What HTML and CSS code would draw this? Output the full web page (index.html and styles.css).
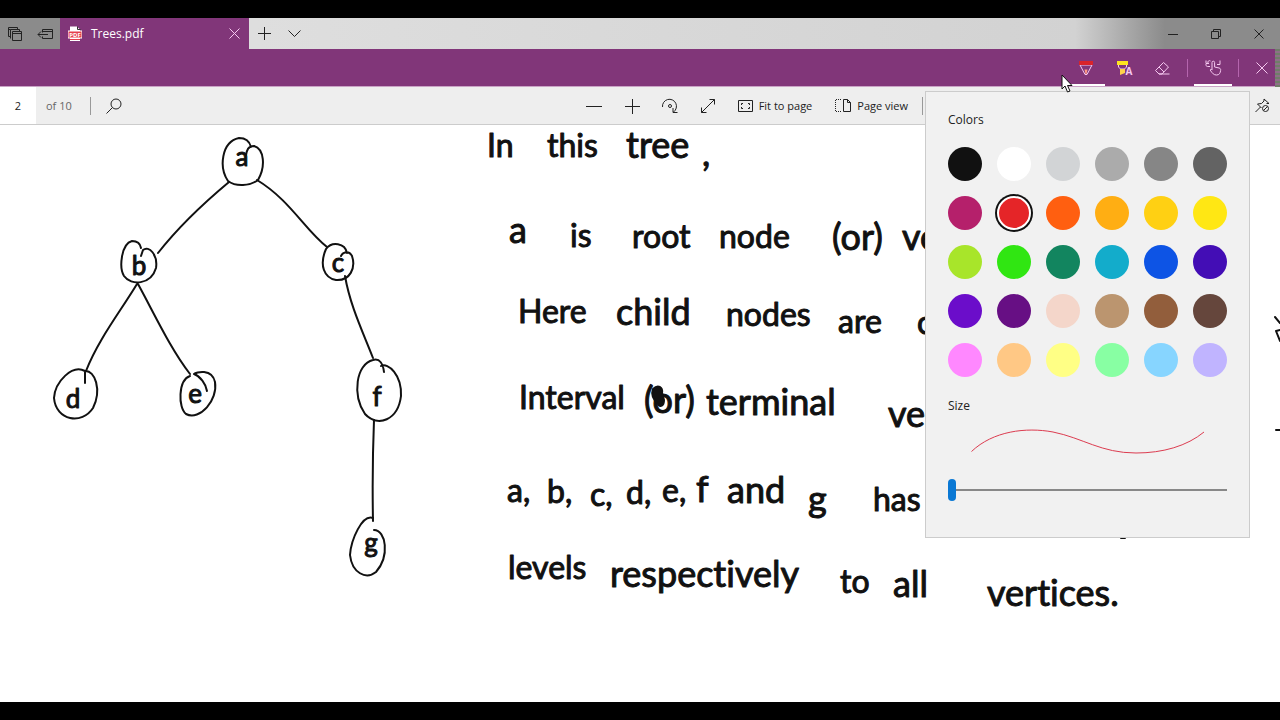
FILE: index.html
```html
<!DOCTYPE html>
<html lang="en">
<head>
    <meta charset="UTF-8">
    <meta name="viewport" content="width=device-width, initial-scale=1.0">
    <title>Trees.pdf</title>
    <link rel="stylesheet" href="styles.css">
</head>
<body>
    <header class="titlebar">
        <div class="tab-tools">
            <button type="button" class="icon-btn" aria-label="Tabs you've set aside">
                <svg width="14" height="14" viewBox="0 0 14 14"><path d="M2.500 9.500h-2v-9h9v2M.5 2.500h2M4.500 4.500h9v9h-9zM4.500 6.500h9M2.500 11.500v-9h9v2"/></svg>
            </button>
            <button type="button" class="icon-btn" aria-label="Set these tabs aside">
                <svg width="16" height="14" viewBox="0 0 16 14"><path d="M5.500 5.500v-3h10v9h-10v-2M5.500 4.500h10M11 7.500H1M4 4.500l-3 3 3 3"/></svg>
            </button>
        </div>
        <div class="tab">
            <svg class="pdf-icon" width="14" height="16" viewBox="0 0 14 16">
                <path d="M2 .5h7l3 3V15H2z" fill="#fff" stroke="none"/>
                <path d="M9.500 .5v3h3" fill="none" stroke="#333"/>
                <rect y="5" width="14" height="7" fill="#e5404c"/>
                <path d="M2 13.500h10" stroke="#e5404c"/>
                <text x="7" y="11" text-anchor="middle">PDF</text>
            </svg>
            <span class="tab-title">Trees.pdf</span>
            <button type="button" class="icon-btn tab-close" aria-label="Close tab">
                <svg width="11" height="11" viewBox="0 0 11 11"><path d="M.5.5l10 10M10.500.5l-10 10"/></svg>
            </button>
        </div>
        <button type="button" class="icon-btn" aria-label="New tab">
            <svg width="13" height="13" viewBox="0 0 13 13"><path d="M6.500 0v13M0 6.500h13"/></svg>
        </button>
        <button type="button" class="icon-btn" aria-label="Show tab previews">
            <svg width="13" height="7" viewBox="0 0 13 7"><path d="M.5.5l6 6 6-6"/></svg>
        </button>
        <div class="window-controls">
            <button type="button" class="icon-btn" aria-label="Minimize">
                <svg width="10" height="10" viewBox="0 0 10 10"><path d="M0 5.500h10"/></svg>
            </button>
            <button type="button" class="icon-btn" aria-label="Restore">
                <svg width="10" height="10" viewBox="0 0 10 10"><path d="M.5 2.500h7v7h-7zM2.500 2.500v-2h7v7h-2"/></svg>
            </button>
            <button type="button" class="icon-btn" aria-label="Close window">
                <svg width="10" height="10" viewBox="0 0 10 10"><path d="M.5.5l9 9M9.500.5l-9 9"/></svg>
            </button>
        </div>
    </header>

    <div class="ink-row">
        <div class="ink-bar">
            <button type="button" class="ink-btn active" aria-label="Pen">
                <svg width="16" height="18" viewBox="0 0 16 18"><path d="M2 6l5 9.500h2L14 6z"/><path d="M6.500 10.500h3L8.500 15h-1z" fill="#ff9a86" stroke="none"/><path d="M1 2h14v4H1z" fill="#d9232b" stroke="none"/></svg>
            </button>
            <button type="button" class="ink-btn" aria-label="Highlighter">
                <svg width="18" height="18" viewBox="0 0 18 18"><path d="M3.500 6v2l2 2h4l2-2V6"/><path d="M5 10h5v4l-5 2z" fill="#ffd24a" stroke="none"/><path d="M2 2h11v4H2z" fill="#ffe51f" stroke="none"/><text x="14" y="16" text-anchor="middle">A</text></svg>
            </button>
            <button type="button" class="ink-btn" aria-label="Eraser">
                <svg width="16" height="14" viewBox="0 0 16 14"><path d="M9.500 1.500l5 4.500-6.500 7H5L1.500 9.500zM5 6l5 5M5 13h10.500"/></svg>
            </button>
            <span class="divider"></span>
            <button type="button" class="ink-btn active" aria-label="Touch writing">
                <svg width="17" height="17" viewBox="0 0 17 17"><path d="M7 11V3.500a1.300 1.300 0 0 1 2.600 0V8l4.500 1c1.500.4 1.700 1.200 1.500 2.500-.3 2.500-1.300 4.500-4 4.500-3 0-4-1.500-6.500-5 .5-1 1.500-.7 2 0M5 7.500H2.500C0 7 .5 4 3 4.500 2 2 4.500 1 5.500 2M1 1.500v3h3M15 1.500v4h-3"/></svg>
            </button>
            <span class="divider"></span>
            <button type="button" class="ink-btn ink-close" aria-label="Exit notes">
                <svg width="12" height="12" viewBox="0 0 12 12"><path d="M.5.5l11 11M11.500.5l-11 11"/></svg>
            </button>
        </div>
        <svg class="cursor" width="12" height="19" viewBox="0 0 12 19"><path d="M1 1v14l3-3 2.500 6 2.500-1-2.500-5.500H11z"/></svg>
    </div>

    <nav class="toolbar">
        <input class="page-input" type="text" value="2" aria-label="Page number">
        <span class="page-total">of 10</span>
        <span class="divider"></span>
        <button type="button" class="icon-btn search-btn" aria-label="Search">
            <svg width="16" height="16" viewBox="0 0 16 16"><circle cx="10" cy="6" r="5"/><path d="M6.500 9.500L.5 15.500"/></svg>
        </button>
        <div class="view-tools">
            <button type="button" class="icon-btn" aria-label="Zoom out">
                <svg width="16" height="16" viewBox="0 0 16 16"><path d="M0 8.500h16"/></svg>
            </button>
            <button type="button" class="icon-btn" aria-label="Zoom in">
                <svg width="16" height="16" viewBox="0 0 16 16"><path d="M8.500 1v15M1 8.500h15"/></svg>
            </button>
            <button type="button" class="icon-btn" aria-label="Rotate">
                <svg width="16" height="16" viewBox="0 0 16 16"><path d="M.5 9A7 7 0 1 1 11.500 14M11 10v4.500h4.500"/><circle cx="8" cy="8" r="1.500"/></svg>
            </button>
            <button type="button" class="icon-btn" aria-label="Full screen">
                <svg width="14" height="14" viewBox="0 0 14 14"><path d="M.5 13.500l13-13M8.500.5h5v5M.5 8.500v5h5"/></svg>
            </button>
            <button type="button" class="text-btn">
                <svg width="15" height="12" viewBox="0 0 15 12"><path d="M.5.5h14v11H.5zM3.500 5V3.500H5M10 3.500h1.500V5M11.500 7v1.500H10M5 8.500H3.500V7"/></svg>
                Fit to page
            </button>
            <button type="button" class="text-btn">
                <svg width="16" height="13" viewBox="0 0 16 13"><path d="M8.500.5h4l3 3v9h-7zM12.500.5v3h3"/><path d="M6 .5H.5v12H6" stroke-dasharray="1 1"/></svg>
                Page view
            </button>
            <span class="divider"></span>
        </div>
        <div class="pin-tools">
            <button type="button" class="icon-btn" aria-label="Unpin toolbar">
                <svg width="15" height="15" viewBox="0 0 15 15"><path d="M.5 14l5-5M6.500 10L2.500 6l4-.5L9 3V1l5 4.500h-2.500"/><circle cx="10.500" cy="10.500" r="3"/><path d="M8.500 12.500l4-4"/></svg>
            </button>
        </div>
    </nav>

    <main class="page">
        <svg class="ink" width="1280" height="577" viewBox="0 125 1280 577">
            <!-- node outlines -->
            <path d="M251 147C249 139 243 138 239 138C221 142 219 168 228 181C236 187 250 186 258 180C266 166 264 149 254 146C248 146 247 150 246 155"/>
            <path d="M141 248C140 242 136 241 132 241C121 244 119 268 124 276C131 286 151 285 156 268C158 255 149 245 143 250L141 256"/>
            <path d="M347 253C345 243 332 241 326 249C319 265 324 278 336 280C350 281 356 268 352 256C349 250 343 252 341 256"/>
            <path d="M85 371C72 364 55 382 54 398C56 421 82 425 93 408C102 390 95 370 85 371V383"/>
            <path d="M190 376C178 380 178 408 186 414C200 421 218 400 215 382C212 368 196 372 194 374C200 376 206 384 207 391"/>
            <path d="M384 372C383 364 380 358 373 360C356 364 352 395 365 414C378 428 398 420 401 396C402 375 388 362 381 366"/>
            <path d="M373 518C362 514 351 540 350 555C352 573 366 580 376 572C390 556 386 530 374 530"/>
            <!-- edges -->
            <path d="M229 182C205 202 180 225 158 253M257 180C290 200 305 230 327 247M137 284C120 312 98 340 86 371M138 284C155 315 170 348 190 374M345 276C350 305 362 330 373 358M374 420Q372 470 373 521"/>
            <g class="node-label">
                <text x="242" y="166">a</text>
                <text x="139" y="275">b</text>
                <text x="338" y="272">c</text>
                <text x="73" y="408">d</text>
                <text x="195" y="403">e</text>
                <text x="377" y="406">f</text>
                <text x="371" y="552">g</text>
            </g>
            <text x="487" y="157">In</text>
            <text x="547" y="157">this</text>
            <text x="626" y="158" class="wide">tree</text>
            <text x="702" y="166" class="wide">,</text>

            <text x="509" y="243" class="wide">a</text>
            <text x="570" y="247">is</text>
            <text x="632" y="248">root</text>
            <text x="719" y="248">node</text>
            <text x="832" y="250" class="wide">(or)</text>
            <text x="902" y="250" class="wide">ve</text>

            <text x="518" y="323">Here</text>
            <text x="616" y="325" class="wide">child</text>
            <text x="726" y="326">nodes</text>
            <text x="838" y="333">are</text>
            <text x="917" y="334">c</text>

            <text x="519" y="409">Interval</text>
            <text x="644" y="413" class="wide">(or)</text>
            <path class="blot" d="M653 389C658 384 663 387 662 393L664 400C664 406 660 408 658 404C654 400 651 394 653 389z"/>
            <text x="706" y="415" class="wide">terminal</text>
            <text x="888" y="427" class="wide">ve</text>

            <text x="507" y="502">a,</text>
            <text x="547" y="503">b,</text>
            <text x="590" y="506">c,</text>
            <text x="626" y="504">d,</text>
            <text x="662" y="502">e,</text>
            <text x="696" y="502" class="wide">f</text>
            <text x="727" y="503" class="wide">and</text>
            <text x="808" y="512" class="wide">g</text>
            <text x="873" y="511">has</text>

            <text x="508" y="579">levels</text>
            <text x="610" y="587" class="wide">respectively</text>
            <text x="840" y="593">to</text>
            <text x="893" y="597" class="wide">all</text>
            <text x="987" y="606" class="wide">vertices.</text>
            <!-- strokes cut off by the panel and the page edge -->
            <path d="M1121 538h4M1275 317l5 6M1280 330l-4 1 4 10M1276 430h4"/>
        </svg>
    </main>

    <section class="pen-panel" aria-label="Pen options">
        <h2 id="colors" class="panel-title">Colors</h2>
        <div class="swatches" role="radiogroup" aria-labelledby="colors">
            <input type="radio" name="color" class="swatch black" aria-label="Black">
            <input type="radio" name="color" class="swatch white" aria-label="White">
            <input type="radio" name="color" class="swatch silver" aria-label="Light gray">
            <input type="radio" name="color" class="swatch gray" aria-label="Gray">
            <input type="radio" name="color" class="swatch mid-gray" aria-label="Medium gray">
            <input type="radio" name="color" class="swatch dark-gray" aria-label="Dark gray">
            <input type="radio" name="color" class="swatch magenta" aria-label="Magenta">
            <input type="radio" name="color" class="swatch red" aria-label="Red" checked>
            <input type="radio" name="color" class="swatch orange" aria-label="Orange">
            <input type="radio" name="color" class="swatch amber" aria-label="Amber">
            <input type="radio" name="color" class="swatch gold" aria-label="Gold">
            <input type="radio" name="color" class="swatch yellow" aria-label="Yellow">
            <input type="radio" name="color" class="swatch lime" aria-label="Lime">
            <input type="radio" name="color" class="swatch green" aria-label="Green">
            <input type="radio" name="color" class="swatch sea" aria-label="Sea green">
            <input type="radio" name="color" class="swatch cyan" aria-label="Cyan">
            <input type="radio" name="color" class="swatch blue" aria-label="Blue">
            <input type="radio" name="color" class="swatch indigo" aria-label="Indigo">
            <input type="radio" name="color" class="swatch violet" aria-label="Violet">
            <input type="radio" name="color" class="swatch purple" aria-label="Purple">
            <input type="radio" name="color" class="swatch blush" aria-label="Blush">
            <input type="radio" name="color" class="swatch tan" aria-label="Tan">
            <input type="radio" name="color" class="swatch brown" aria-label="Brown">
            <input type="radio" name="color" class="swatch dark-brown" aria-label="Dark brown">
            <input type="radio" name="color" class="swatch pink" aria-label="Pink">
            <input type="radio" name="color" class="swatch peach" aria-label="Peach">
            <input type="radio" name="color" class="swatch lemon" aria-label="Lemon">
            <input type="radio" name="color" class="swatch mint" aria-label="Mint">
            <input type="radio" name="color" class="swatch sky" aria-label="Sky blue">
            <input type="radio" name="color" class="swatch lavender" aria-label="Lavender">
        </div>
        <label for="size" class="panel-title">Size</label>
        <svg class="preview" width="234" height="26" viewBox="0 0 234 26"><path d="M.5 22.500C22 2 55-2 82 3C112 9 130 24 165 24C192 24 216 17 233 3"/></svg>
        <input type="range" id="size" class="size-slider" min="1" max="10" value="1">
    </section>
</body>
</html>
```

FILE: styles.css
```css
* {
    box-sizing: border-box;
}

body {
    font-family: "Open Sans", "Noto Sans", sans-serif;
    font-size: 12px;
    color: #222;
    background: #000;
    margin: 0;
    padding: 18px 0;
    height: 100vh;
    display: flex;
    flex-direction: column;
    position: relative;
    overflow: hidden;
}

button {
    font: inherit;
    color: inherit;
    background: none;
    border: none;
    padding: 0;
    display: flex;
    align-items: center;
    justify-content: center;
}

svg {
    fill: none;
    stroke: currentColor;
    display: block;
    flex: none;
}

.icon-btn {
    width: 30px;
    height: 100%;
}

.divider {
    width: 1px;
    height: 18px;
    background: #999;
}

/* title bar */
.titlebar {
    display: flex;
    flex: none;
    height: 31px;
    background: linear-gradient(to right, #dedede 20%, #d2d2d2 84%, #8b8b8b 91%, #8b8b8b);
}

.tab-tools {
    display: flex;
    width: 60px;
    background: #8b8b8b;
}

.tab {
    display: flex;
    align-items: center;
    width: 189px;
    padding-left: 8px;
    gap: 9px;
    background: #813679;
    color: #fff;
}

.pdf-icon text {
    font-size: 6px;
    font-weight: bold;
    fill: #fff;
    stroke: none;
}

.tab-title {
    flex: 1;
}

.tab-close {
    color: #f5c8f0;
}

.window-controls {
    display: flex;
    margin-left: auto;
}

.window-controls .icon-btn {
    width: 43px;
}

/* inking bar */
.ink-row {
    flex: none;
    height: 38px;
    padding-right: 5px;
    background: repeating-linear-gradient(#6f7d68 0 2px, #8d6f87 2px 4px);
    position: relative;
}

.ink-bar {
    display: flex;
    align-items: center;
    justify-content: flex-end;
    height: 100%;
    background: #813679;
    color: #f5c8f0;
    border-bottom: 1px solid #c9a3c5;
}

.ink-bar .divider {
    height: 18px;
    margin: 0 6px;
    background: #b565ae;
}

.ink-btn {
    width: 38px;
    height: 37px;
    border: solid transparent;
    border-width: 2px 0;
}

.ink-btn.active {
    border-bottom-color: #fff;
}

.ink-btn text {
    font-size: 10px;
    font-weight: bold;
    fill: #f5c8f0;
    stroke: none;
}

.ink-close {
    width: 26px;
    margin-left: 4px;
}

.cursor {
    position: absolute;
    right: 207px;
    top: 25px;
    z-index: 3;
    fill: #fff;
    stroke: #111;
}

/* document toolbar */
.toolbar {
    display: flex;
    flex: none;
    align-items: center;
    height: 38px;
    background: #eee;
    border-bottom: 1px solid #ccc;
}

.page-input {
    width: 36px;
    height: 37px;
    border: none;
    padding: 0;
    background: #fff;
    font: inherit;
    font-size: 11px;
    color: #222;
    text-align: center;
}

.page-total {
    width: 44px;
    margin: 0 0 0 10px;
    font-size: 11px;
    color: #666;
}

.search-btn {
    width: 46px;
}

.view-tools {
    display: flex;
    align-items: center;
    height: 100%;
    margin-left: auto;
}

.view-tools .icon-btn {
    width: 38px;
}

.text-btn {
    gap: 6px;
    height: 100%;
    margin: 0 12px 0 11px;
    font-size: 11px;
    white-space: nowrap;
}

.text-btn + .divider {
    margin-left: 2px;
}

.pin-tools {
    display: flex;
    justify-content: flex-end;
    width: 357px;
    height: 100%;
    padding-right: 3px;
}

/* handwritten page */
.page {
    flex: 1;
    min-height: 0;
    overflow: hidden;
    background: #fff;
}

.ink {
    color: #111;
    stroke-width: 2px;
    stroke-linecap: round;
    stroke-linejoin: round;
}

.ink text {
    font-family: Lato, sans-serif;
    font-size: 32px;
    font-variant-ligatures: none;
    fill: #111;
    stroke-width: 1px;
}

.ink .wide {
    font-size: 36px;
}

.ink .node-label text {
    font-size: 26px;
    text-anchor: middle;
}

.ink .blot {
    fill: #111;
}

/* pen options flyout */
.pen-panel {
    position: absolute;
    top: 91px;
    right: 30px;
    z-index: 2;
    display: flex;
    flex-direction: column;
    width: 325px;
    padding: 19px 22px 36px;
    background: #f1f1f1;
    border: 1px solid #ccc;
}

.panel-title {
    margin: 0;
    font-size: 12px;
    font-weight: normal;
    line-height: 18px;
}

.swatches {
    display: grid;
    grid-template-columns: repeat(6, 34px);
    justify-content: space-between;
    row-gap: 15px;
    margin: 18px 0 20px;
}

.swatch {
    appearance: none;
    width: 34px;
    height: 34px;
    margin: 0;
    border-radius: 50%;
}

.swatch:checked {
    border: 2px solid #fff;
    box-shadow: 0 0 0 2px #111;
}

.black { background: #111; }
.white { background: #fff; }
.silver { background: #d2d4d6; }
.gray { background: #ababab; }
.mid-gray { background: #868686; }
.dark-gray { background: #636363; }
.magenta { background: #b5206b; }
.red { background: #e52528; }
.orange { background: #ff5f10; }
.amber { background: #ffae13; }
.gold { background: #ffd013; }
.yellow { background: #ffe714; }
.lime { background: #a8e52a; }
.green { background: #30e612; }
.sea { background: #12855f; }
.cyan { background: #13accb; }
.blue { background: #0d54e5; }
.indigo { background: #430db5; }
.violet { background: #6b0dca; }
.purple { background: #670f84; }
.blush { background: #f4d6ca; }
.tan { background: #bb956f; }
.brown { background: #925e3c; }
.dark-brown { background: #65463c; }
.pink { background: #ff88ff; }
.peach { background: #ffc885; }
.lemon { background: #ffff85; }
.mint { background: #88ffa3; }
.sky { background: #87d5ff; }
.lavender { background: #c0b4ff; }

.preview {
    margin: 14px 0 24px 23px;
    color: #dc3c50;
}

.size-slider {
    appearance: none;
    width: 100%;
    height: 22px;
    margin: 0;
    background: linear-gradient(#888, #888) center / 100% 2px no-repeat;
}

.size-slider::-webkit-slider-thumb {
    appearance: none;
    width: 8px;
    height: 22px;
    border-radius: 4px;
    background: #0a78d4;
}
```
